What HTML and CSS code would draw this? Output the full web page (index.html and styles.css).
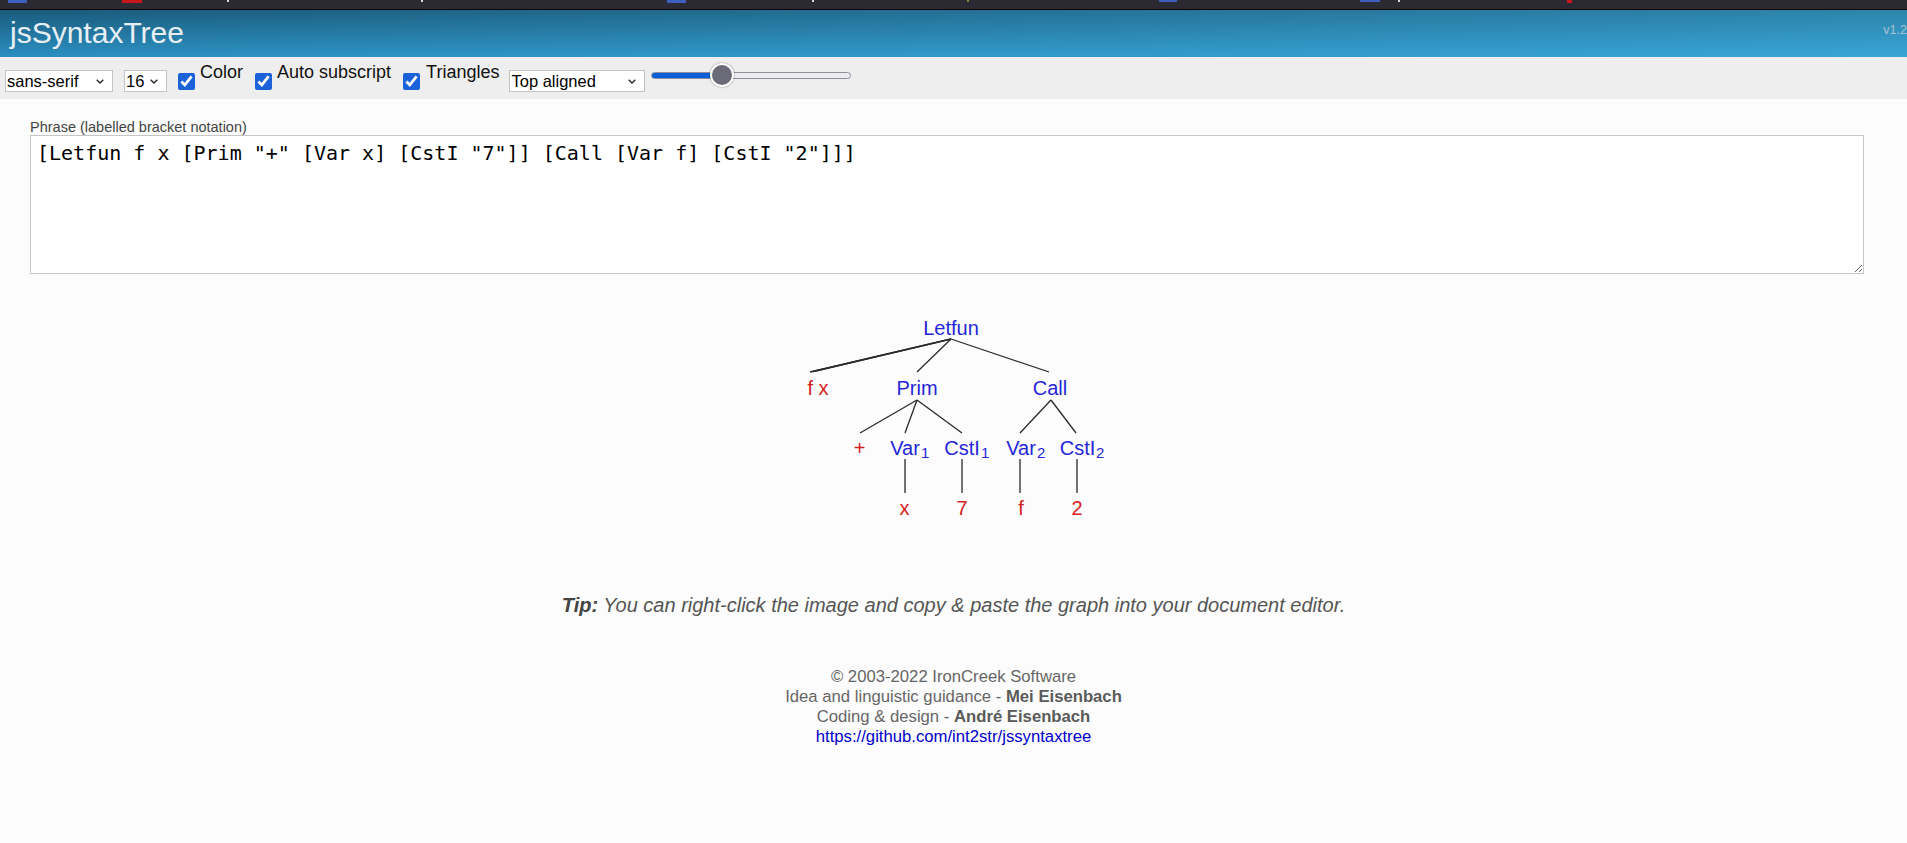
FILE: index.html
```html
<!DOCTYPE html>
<html lang="en">
<head>
<meta charset="utf-8">
<title>jsSyntaxTree</title>
<link rel="stylesheet" href="styles.css">
</head>
<body>
<div class="tabstrip">
  <span class="tab-mark blue m1"></span>
  <span class="tab-mark red m2"></span>
  <span class="tab-mark white m3"></span>
  <span class="tab-mark white m4"></span>
  <span class="tab-mark blue m5"></span>
  <span class="tab-mark white m6"></span>
  <span class="tab-mark olive m7"></span>
  <span class="tab-mark blue m8"></span>
  <span class="tab-mark blue m9"></span>
  <span class="tab-mark white m10"></span>
  <span class="tab-mark red m11"></span>
</div>
<header class="header">
  <h1 class="title">jsSyntaxTree</h1>
  <span class="version">v1.2</span>
</header>
<div class="toolbar">
  <div class="select sel-font">
    <select><option>sans-serif</option><option>serif</option><option>monospace</option></select>
    <svg class="chev" width="8" height="5" viewBox="0 0 8 5"><path d="M0.7 0.7 L4 4 L7.3 0.7" fill="none" stroke="#222" stroke-width="1.3"/></svg>
  </div>
  <div class="select sel-size">
    <select><option>16</option><option>12</option><option>20</option></select>
    <svg class="chev" width="8" height="5" viewBox="0 0 8 5"><path d="M0.7 0.7 L4 4 L7.3 0.7" fill="none" stroke="#222" stroke-width="1.3"/></svg>
  </div>
  <label class="opt opt-color"><input class="cb" type="checkbox" checked><span class="opt-text">Color</span></label>
  <label class="opt opt-sub"><input class="cb" type="checkbox" checked><span class="opt-text">Auto subscript</span></label>
  <label class="opt opt-tri"><input class="cb" type="checkbox" checked><span class="opt-text wide">Triangles</span></label>
  <div class="select sel-align">
    <select><option>Top aligned</option><option>Bottom aligned</option></select>
    <svg class="chev" width="8" height="5" viewBox="0 0 8 5"><path d="M0.7 0.7 L4 4 L7.3 0.7" fill="none" stroke="#222" stroke-width="1.3"/></svg>
  </div>
  <input class="spacing" type="range" min="0" max="100" value="33">
</div>
<main class="main">
  <label class="phrase-label" for="phrase">Phrase (labelled bracket notation)</label>
  <textarea id="phrase" class="phrase" spellcheck="false">[Letfun f x [Prim "+" [Var x] [CstI "7"]] [Call [Var f] [CstI "2"]]]</textarea>
  <div class="tree">
    <svg class="tree-svg" width="321" height="230" viewBox="0 0 321 230">
      <g class="edges" stroke="#2a2a2a" stroke-width="1.3" fill="none">
        <polygon points="158,39 17,72 25,70.5"/>
        <line x1="158" y1="39" x2="20" y2="71.5"/>
        <line x1="158" y1="39" x2="124" y2="72"/>
        <line x1="158" y1="39" x2="256" y2="72"/>
        <line x1="124" y1="100" x2="67" y2="133"/>
        <line x1="124" y1="100" x2="112" y2="133"/>
        <line x1="124" y1="100" x2="169" y2="133"/>
        <line x1="258" y1="100" x2="227" y2="133"/>
        <line x1="258" y1="100" x2="283" y2="133"/>
        <line x1="112" y1="159" x2="112" y2="193"/>
        <line x1="169" y1="159" x2="169" y2="193"/>
        <line x1="227" y1="159" x2="227" y2="193"/>
        <line x1="284" y1="159" x2="284" y2="193"/>
      </g>
      <g class="nodes">
        <text x="158" y="35" text-anchor="middle">Letfun</text>
        <text x="124" y="95" text-anchor="middle">Prim</text>
        <text x="257" y="95" text-anchor="middle">Call</text>
        <text x="112" y="155" text-anchor="middle">Var</text>
        <text class="sub" x="128" y="158">1</text>
        <text x="169" y="155" text-anchor="middle">CstI</text>
        <text class="sub" x="188" y="158">1</text>
        <text x="228" y="155" text-anchor="middle">Var</text>
        <text class="sub" x="244" y="158">2</text>
        <text x="284.5" y="155" text-anchor="middle">CstI</text>
        <text class="sub" x="303" y="158">2</text>
      </g>
      <g class="leaves">
        <text x="25" y="95" text-anchor="middle">f x</text>
        <text x="66.5" y="155" text-anchor="middle">+</text>
        <text x="111.5" y="215" text-anchor="middle">x</text>
        <text x="169" y="215" text-anchor="middle">7</text>
        <text x="228" y="215" text-anchor="middle">f</text>
        <text x="284" y="215" text-anchor="middle">2</text>
      </g>
    </svg>
  </div>
  <p class="tip"><b>Tip:</b> You can right-click the image and copy &amp; paste the graph into your document editor.</p>
  <footer class="footer">
    <div>© 2003-2022 IronCreek Software</div>
    <div>Idea and linguistic guidance - <b>Mei Eisenbach</b></div>
    <div>Coding &amp; design - <b>André Eisenbach</b></div>
    <div><a class="repo" href="https://github.com/int2str/jssyntaxtree">https://github.com/int2str/jssyntaxtree</a></div>
  </footer>
</main>
</body>
</html>
```

FILE: styles.css
```css
* { box-sizing: border-box; }

html, body {
  margin: 0;
  padding: 0;
}

body {
  background: #fcfcfc;
  font-family: "Liberation Sans", Arial, sans-serif;
  color: #222;
  overflow: hidden;
}

/* top browser remnant strip */
.tabstrip {
  height: 10px;
  background: #2b2a33;
  border-bottom: 1px solid #050505;
  display: flex;
  align-items: flex-start;
}
.tab-mark { display: block; height: 2px; }
.tab-mark.blue { background: #3f5fc0; }
.tab-mark.red { background: #c8161d; height: 3px; }
.tab-mark.white { background: #d8d8d8; width: 2px; height: 2px; }
.tab-mark.olive { background: #8d7c3c; width: 2px; height: 2px; }
.m1 { margin-left: 8px; width: 19px; height: 3px; }
.m2 { margin-left: 95px; width: 20px; }
.m3 { margin-left: 85px; }
.m4 { margin-left: 192px; }
.m5 { margin-left: 244px; width: 19px; height: 3px; }
.m6 { margin-left: 126px; }
.m7 { margin-left: 153px; }
.m8 { margin-left: 190px; width: 18px; }
.m9 { margin-left: 183px; width: 20px; }
.m10 { margin-left: 18px; }
.m11 { margin-left: 167px; width: 5px; }

/* header */
.header {
  position: relative;
  height: 47px;
  overflow: hidden;
  background:
    linear-gradient(to right, rgba(80, 205, 255, 0) 0%, rgba(80, 205, 255, 0.36) 100%),
    linear-gradient(to bottom, #1a5b7c 0%, #2b8fc1 100%);
  padding: 8px 0 0 10px;
}
.title {
  margin: 0;
  font-family: "Liberation Sans", Arial, sans-serif;
  font-weight: normal;
  font-size: 30px;
  line-height: 30px;
  color: #e8eff4;
}
.version {
  position: absolute;
  right: 0;
  top: 13px;
  font-size: 12.5px;
  line-height: 14px;
  color: #a9c3d2;
}

/* toolbar */
.toolbar {
  height: 42px;
  background: #eeeeee;
  display: flex;
  align-items: flex-start;
  padding-left: 5px;
}
.select {
  position: relative;
  margin-top: 13px;
  height: 22px;
  background: #fff;
  border: 1px solid #c4c4c4;
}
.select select {
  -webkit-appearance: none;
  appearance: none;
  border: none;
  outline: none;
  background: transparent;
  margin: 0;
  padding: 0 0 0 1px;
  width: 100%;
  height: 20px;
  font-family: "Liberation Sans", Arial, sans-serif;
  font-size: 16.5px;
  color: #000;
}
.chev {
  position: absolute;
  right: 8px;
  top: 8px;
  pointer-events: none;
}
.sel-font { width: 108px; }
.sel-size { width: 43px; margin-left: 11px; }
.sel-align { width: 136px; margin-left: 10px; }

.opt {
  display: flex;
  align-items: flex-start;
  margin-left: 12px;
}
.opt-color { margin-left: 11px; }
.cb {
  margin: 16px 0 0 0;
  width: 17px;
  height: 17px;
  accent-color: #1b62da;
}
.opt-text {
  margin-left: 5px;
  margin-top: 5px;
  font-size: 18px;
  line-height: 20px;
  color: #111;
}
.opt-text.wide { margin-left: 6px; }

.spacing {
  -webkit-appearance: none;
  appearance: none;
  margin: 6px 0 0 6px;
  width: 200px;
  height: 24px;
  background: transparent;
}
.spacing::-webkit-slider-runnable-track {
  height: 7px;
  border-radius: 4px;
  border: 1px solid #8e8e9c;
  background: linear-gradient(to right, #0b5fd8 0, #0b5fd8 70px, #ebebf0 70px);
}
.spacing::-webkit-slider-thumb {
  -webkit-appearance: none;
  appearance: none;
  width: 24px;
  height: 24px;
  margin-top: -9.5px;
  border-radius: 50%;
  background: #6b6a78;
  border: 2px solid #fff;
  box-shadow: 0 0 2px rgba(0, 0, 0, 0.45);
}

/* main */
.main {
  padding-top: 20px;
}
.phrase-label {
  display: block;
  margin-left: 30px;
  font-size: 14.5px;
  line-height: 16px;
  color: #444;
}
.phrase {
  display: block;
  margin: 0 0 0 30px;
  width: 1834px;
  height: 139px;
  border: 1px solid #c6c6c6;
  background: #fff;
  padding: 5px 6px;
  font-family: "DejaVu Sans Mono", "Liberation Mono", monospace;
  font-size: 20px;
  line-height: 24px;
  color: #000;
  outline: none;
}

.tree-svg {
  display: block;
  margin: 26px auto 0;
  font-family: "Liberation Sans", Arial, sans-serif;
  font-size: 20px;
}
.nodes text { fill: #2626d9; }
.nodes .sub { font-size: 15px; }
.leaves text { fill: #d42222; }

.tip {
  margin: 63px 0 0;
  text-align: center;
  font-style: italic;
  font-size: 20px;
  line-height: 24px;
  color: #555;
}
.tip b { color: #444; }

.footer {
  margin-top: 50px;
  text-align: center;
  font-size: 16.7px;
  line-height: 20px;
  color: #666;
}
.footer b { color: #5a5a5a; }
.repo { color: #0000cc; text-decoration: none; }
```
